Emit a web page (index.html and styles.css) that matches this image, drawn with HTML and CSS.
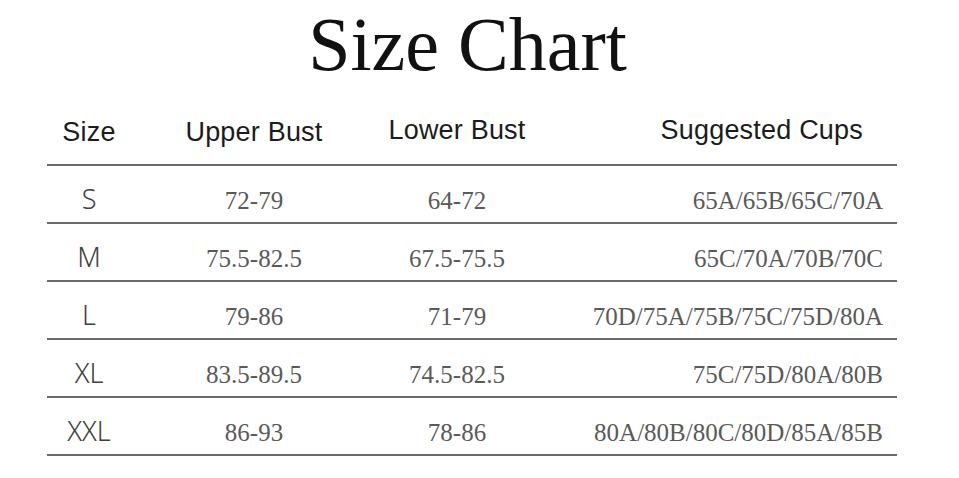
FILE: index.html
```html
<!DOCTYPE html>
<html lang="en">
<head>
<meta charset="utf-8">
<title>Size Chart</title>
<link rel="stylesheet" href="styles.css">
</head>
<body>
<h1 class="title">Size Chart</h1>
<div class="chart">
  <div class="row head">
    <div class="c1">Size</div>
    <div class="c2">Upper Bust</div>
    <div class="c3 up">Lower Bust</div>
    <div class="c4 up">Suggested Cups</div>
  </div>
  <div class="row">
    <div class="c1 sz">S</div>
    <div class="c2">72-79</div>
    <div class="c3">64-72</div>
    <div class="c4">65A/65B/65C/70A</div>
  </div>
  <div class="row">
    <div class="c1 sz">M</div>
    <div class="c2">75.5-82.5</div>
    <div class="c3">67.5-75.5</div>
    <div class="c4">65C/70A/70B/70C</div>
  </div>
  <div class="row">
    <div class="c1 sz">L</div>
    <div class="c2">79-86</div>
    <div class="c3">71-79</div>
    <div class="c4">70D/75A/75B/75C/75D/80A</div>
  </div>
  <div class="row">
    <div class="c1 sz">XL</div>
    <div class="c2">83.5-89.5</div>
    <div class="c3">74.5-82.5</div>
    <div class="c4">75C/75D/80A/80B</div>
  </div>
  <div class="row">
    <div class="c1 sz">XXL</div>
    <div class="c2">86-93</div>
    <div class="c3">78-86</div>
    <div class="c4">80A/80B/80C/80D/85A/85B</div>
  </div>
</div>
</body>
</html>
```

FILE: styles.css
```css
html, body {
  margin: 0;
  padding: 0;
  background: #ffffff;
}

.title {
  margin: 6px 0 0 0;
  padding-right: 24px;
  height: 76px;
  font-family: "Liberation Serif", "Times New Roman", serif;
  font-weight: 400;
  font-size: 76px;
  line-height: 76px;
  text-align: center;
  color: #111111;
}

.chart {
  margin-left: 47px;
  width: 850px;
}

.row {
  display: grid;
  grid-template-columns: 84px 246px 160px 360px;
  padding-top: 14px;
  height: 42px;
  box-sizing: content-box;
  border-bottom: 2px solid #6a6a6a;
  font-family: "Liberation Serif", "Times New Roman", serif;
  font-size: 25px;
  line-height: 42px;
  color: #5a5a5a;
}

.row.head {
  height: 30px;
  padding-top: 35px;
  padding-bottom: 17px;
  line-height: 30px;
  font-family: "Liberation Sans", Arial, sans-serif;
  font-size: 27px;
  color: #1c1c1c;
  letter-spacing: 0.2px;
}

.c1, .c2, .c3 {
  text-align: center;
}

.c4 {
  text-align: right;
  padding-right: 14px;
}

.head .c4 {
  padding-right: 34px;
}

.up {
  position: relative;
  top: -2px;
}

.sz {
  font-family: "Noto Sans", "DejaVu Sans", sans-serif;
  font-weight: 300;
  font-size: 27px;
  color: #404040;
  position: relative;
  top: -2px;
}
```
